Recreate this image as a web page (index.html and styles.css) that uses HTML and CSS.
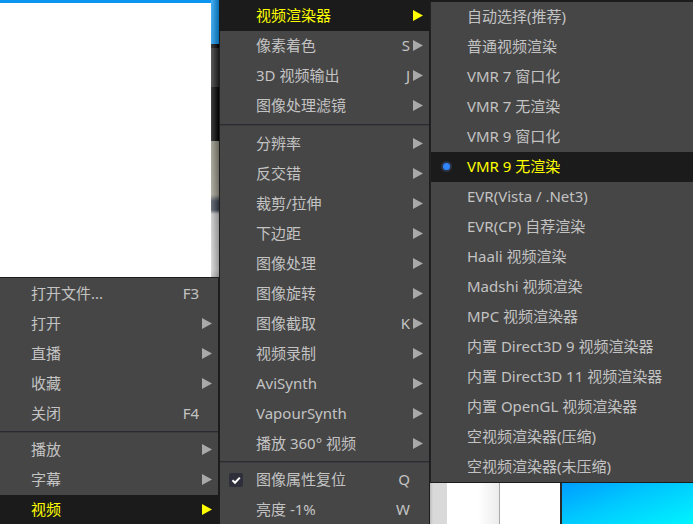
FILE: index.html
```html
<!DOCTYPE html>
<html lang="zh-CN">
<head>
<meta charset="utf-8">
<title>菜单</title>
<link rel="stylesheet" href="styles.css">
</head>
<body>
<div class="desktop">
  <div class="win win-video">
    <div class="video-white"></div>
    <div class="video-strip"></div>
  </div>
  <div class="win win-bottom">
    <div class="wb-gray"></div>
    <div class="wb-soft"></div>
    <div class="wb-white"></div>
    <div class="wb-blue"></div>
  </div>

  <div class="menu menu-main">
    <div class="item"><span class="gutter"></span><span class="label">打开文件...</span><span class="key">F3</span><span class="sub"></span></div>
    <div class="item"><span class="gutter"></span><span class="label">打开</span><span class="key"></span><span class="sub arrow"></span></div>
    <div class="item"><span class="gutter"></span><span class="label">直播</span><span class="key"></span><span class="sub arrow"></span></div>
    <div class="item"><span class="gutter"></span><span class="label">收藏</span><span class="key"></span><span class="sub arrow"></span></div>
    <div class="item"><span class="gutter"></span><span class="label">关闭</span><span class="key">F4</span><span class="sub"></span></div>
    <div class="sep"></div>
    <div class="item"><span class="gutter"></span><span class="label">播放</span><span class="key"></span><span class="sub arrow"></span></div>
    <div class="item"><span class="gutter"></span><span class="label">字幕</span><span class="key"></span><span class="sub arrow"></span></div>
    <div class="item active"><span class="gutter"></span><span class="label">视频</span><span class="key"></span><span class="sub arrow"></span></div>
  </div>

  <div class="menu menu-video">
    <div class="item active"><span class="gutter"></span><span class="label">视频渲染器</span><span class="key"></span><span class="sub arrow"></span></div>
    <div class="item"><span class="gutter"></span><span class="label">像素着色</span><span class="key">S</span><span class="sub arrow"></span></div>
    <div class="item"><span class="gutter"></span><span class="label">3D 视频输出</span><span class="key">J</span><span class="sub arrow"></span></div>
    <div class="item"><span class="gutter"></span><span class="label">图像处理滤镜</span><span class="key"></span><span class="sub arrow"></span></div>
    <div class="sep sep-wide"></div>
    <div class="item"><span class="gutter"></span><span class="label">分辨率</span><span class="key"></span><span class="sub arrow"></span></div>
    <div class="item"><span class="gutter"></span><span class="label">反交错</span><span class="key"></span><span class="sub arrow"></span></div>
    <div class="item"><span class="gutter"></span><span class="label">裁剪/拉伸</span><span class="key"></span><span class="sub arrow"></span></div>
    <div class="item"><span class="gutter"></span><span class="label">下边距</span><span class="key"></span><span class="sub arrow"></span></div>
    <div class="item"><span class="gutter"></span><span class="label">图像处理</span><span class="key"></span><span class="sub arrow"></span></div>
    <div class="item"><span class="gutter"></span><span class="label">图像旋转</span><span class="key"></span><span class="sub arrow"></span></div>
    <div class="item"><span class="gutter"></span><span class="label">图像截取</span><span class="key">K</span><span class="sub arrow"></span></div>
    <div class="item"><span class="gutter"></span><span class="label">视频录制</span><span class="key"></span><span class="sub arrow"></span></div>
    <div class="item"><span class="gutter"></span><span class="label">AviSynth</span><span class="key"></span><span class="sub arrow"></span></div>
    <div class="item"><span class="gutter"></span><span class="label">VapourSynth</span><span class="key"></span><span class="sub arrow"></span></div>
    <div class="item"><span class="gutter"></span><span class="label">播放 360° 视频</span><span class="key"></span><span class="sub arrow"></span></div>
    <div class="sep"></div>
    <div class="item"><span class="gutter"><span class="check"><svg width="14" height="14" viewBox="0 0 14 14"><path d="M3.5 7.2 L6 9.8 L10.8 4.6" fill="none" stroke="#ffffff" stroke-width="2"/></svg></span></span><span class="label">图像属性复位</span><span class="key">Q</span><span class="sub"></span></div>
    <div class="item"><span class="gutter"></span><span class="label">亮度 -1%</span><span class="key">W</span><span class="sub"></span></div>
  </div>

  <div class="menu menu-renderer">
    <div class="item"><span class="gutter"></span><span class="label">自动选择(推荐)</span></div>
    <div class="item"><span class="gutter"></span><span class="label">普通视频渲染</span></div>
    <div class="item"><span class="gutter"></span><span class="label">VMR 7 窗口化</span></div>
    <div class="item"><span class="gutter"></span><span class="label">VMR 7 无渲染</span></div>
    <div class="item"><span class="gutter"></span><span class="label">VMR 9 窗口化</span></div>
    <div class="item active"><span class="gutter"><span class="bullet"></span></span><span class="label">VMR 9 无渲染</span></div>
    <div class="item"><span class="gutter"></span><span class="label">EVR(Vista / .Net3)</span></div>
    <div class="item"><span class="gutter"></span><span class="label">EVR(CP) 自荐渲染</span></div>
    <div class="item"><span class="gutter"></span><span class="label">Haali 视频渲染</span></div>
    <div class="item"><span class="gutter"></span><span class="label">Madshi 视频渲染</span></div>
    <div class="item"><span class="gutter"></span><span class="label">MPC 视频渲染器</span></div>
    <div class="item"><span class="gutter"></span><span class="label">内置 Direct3D 9 视频渲染器</span></div>
    <div class="item"><span class="gutter"></span><span class="label">内置 Direct3D 11 视频渲染器</span></div>
    <div class="item"><span class="gutter"></span><span class="label">内置 OpenGL 视频渲染器</span></div>
    <div class="item"><span class="gutter"></span><span class="label">空视频渲染器(压缩)</span></div>
    <div class="item"><span class="gutter"></span><span class="label">空视频渲染器(未压缩)</span></div>
  </div>
</div>
</body>
</html>
```

FILE: styles.css
```css
* { box-sizing: border-box; }

html, body {
  margin: 0;
  padding: 0;
  width: 693px;
  height: 524px;
  overflow: hidden;
  background: #2a2a2a;
}

.desktop {
  position: relative;
  width: 693px;
  height: 524px;
  overflow: hidden;
  font-family: "Noto Sans", "Noto Sans CJK SC", sans-serif;
  font-size: 15px;
  background: #1b1b1b;
}

/* underlying application windows */
.win {
  position: absolute;
  display: flex;
}

.win-video {
  left: 0;
  top: 0;
  width: 219px;
  height: 277px;
  border-top: 3px solid #0a96f0;
}

.video-white {
  width: 211px;
  background: #ffffff;
}

.video-strip {
  flex: 1;
  margin-top: -3px;
  background:
    linear-gradient(90deg, rgba(255,255,255,0.25), rgba(0,0,0,0.25)),
    linear-gradient(180deg,
      #0a96f0 0, #0a8ee4 44px,
      #000 44px, #000 48px,
      #232323 48px, #232323 87px,
      #000 87px, #000 141px,
      #8c8b7c 141px, #9a998b 195px,
      #3c4250 201px, #3c4250 210px,
      #c2c2c2 214px, #d0d0d0 270px, #b0b0b0 280px);
}

.win-bottom {
  left: 430px;
  top: 482px;
  width: 263px;
  height: 42px;
}

.wb-gray {
  width: 17px;
  background: linear-gradient(90deg, #bdbdbd 0, #d9d9d9 3px, #d9d9d9 100%);
}

.wb-soft {
  width: 53px;
  background: linear-gradient(90deg, #ffffff 60%, #ececec 100%);
  border-right: 1px solid #a8a8a8;
}

.wb-white {
  width: 62px;
  background: #ffffff;
  border-right: 2px solid #2a2a2a;
}

.wb-blue {
  flex: 1;
  background: linear-gradient(160deg, #009cff 0%, #00c8ff 45%, #00f4ff 100%);
}

/* menus */
.menu {
  position: absolute;
  display: flex;
  flex-direction: column;
  background: #464646;
  border: 1px solid #1c1c1c;
  color: #c3c3c3;
}

.menu-main {
  left: 0;
  top: 277px;
  width: 219px;
  height: 260px;
  border-left: 0;
  padding-top: 1px;
}

.menu-video {
  left: 219px;
  top: 0;
  width: 211px;
  height: 540px;
}

.menu-renderer {
  left: 430px;
  top: 1px;
  width: 270px;
  height: 482px;
  border-left-color: #222;
}

.item {
  display: flex;
  align-items: center;
  height: 30px;
  padding-bottom: 1px;
  flex: none;
  white-space: nowrap;
}

.item.active {
  background: #1b1b1b;
  color: #ffff00;
}

.gutter {
  flex: none;
  width: 36px;
  display: flex;
  align-items: center;
}

.menu-main .gutter { width: 31px; }

.label {
  flex: 1;
  line-height: 29px;
}

.key {
  flex: none;
  line-height: 29px;
}

.sub {
  flex: none;
  width: 14px;
  height: 11px;
  padding-left: 3px;
}

.menu-main .item { padding-right: 5px; }
.menu-video .item { padding-right: 5px; }

.arrow::before {
  content: "";
  display: block;
  width: 10px;
  height: 11px;
  background: #a9a9a9;
  clip-path: polygon(0 0, 100% 50%, 0 100%);
}

.item.active .arrow::before { background: #ffff00; }

.sep {
  flex: none;
  height: 6px;
  padding-top: 2px;
}

.sep::before {
  content: "";
  display: block;
  height: 1px;
  background: #2b2b33;
  border-bottom: 1px solid #3c3c3c;
  box-sizing: content-box;
}

.sep-wide {
  height: 8px;
  padding-top: 3px;
}

.check {
  margin-left: 9px;
  width: 14px;
  height: 14px;
  border-radius: 2px;
  background: #2e2f3b;
  display: flex;
}

.bullet {
  margin-left: 12px;
  width: 7px;
  height: 7px;
  border-radius: 50%;
  background: #2f86ff;
  box-shadow: 0 0 0 2px #2b3446;
}
```
